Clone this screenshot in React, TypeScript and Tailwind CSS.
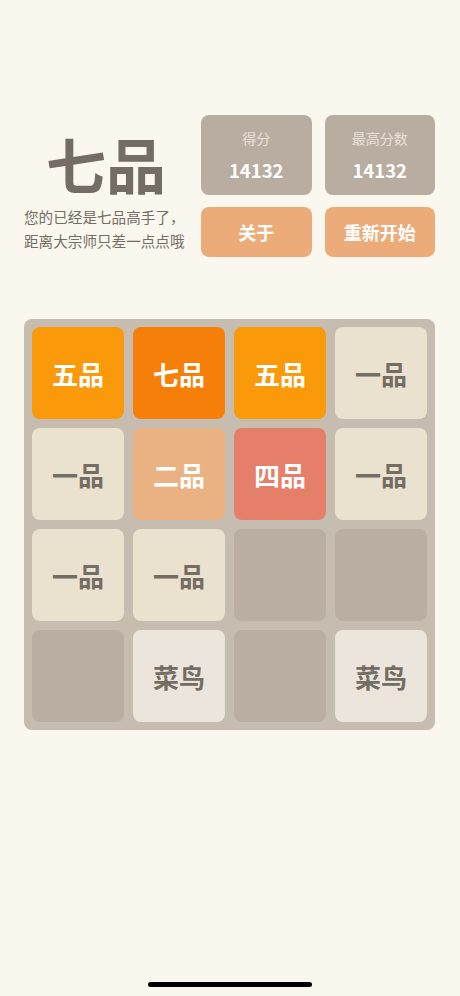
const font = { fontFamily: '"Noto Sans CJK SC", "Noto Sans", sans-serif' };

type Tile = { text: string; bg: string; fg: string };

const tiles: Tile[] = [
  { text: "五品", bg: "bg-[#fa9a0b]", fg: "text-white" },
  { text: "七品", bg: "bg-[#f57f08]", fg: "text-white" },
  { text: "五品", bg: "bg-[#fa9a0b]", fg: "text-white" },
  { text: "一品", bg: "bg-[#ebe1cf]", fg: "text-[#736d64]" },
  { text: "一品", bg: "bg-[#ebe1cf]", fg: "text-[#736d64]" },
  { text: "二品", bg: "bg-[#eab283]", fg: "text-white" },
  { text: "四品", bg: "bg-[#e57f69]", fg: "text-white" },
  { text: "一品", bg: "bg-[#ebe1cf]", fg: "text-[#736d64]" },
  { text: "一品", bg: "bg-[#ebe1cf]", fg: "text-[#736d64]" },
  { text: "一品", bg: "bg-[#ebe1cf]", fg: "text-[#736d64]" },
  { text: "", bg: "bg-[#b9aea1]", fg: "" },
  { text: "", bg: "bg-[#b9aea1]", fg: "" },
  { text: "", bg: "bg-[#b9aea1]", fg: "" },
  { text: "菜鸟", bg: "bg-[#ebe5dc]", fg: "text-[#736d64]" },
  { text: "", bg: "bg-[#b9aea1]", fg: "" },
  { text: "菜鸟", bg: "bg-[#ebe5dc]", fg: "text-[#736d64]" },
];

export default function App() {
  return (
    <div className="w-[460px] h-[996px] bg-[#f9f7ee] flex flex-col" style={font}>
      {/* 头部 */}
      <div className="flex pt-[115px] pl-[24px] pr-[25px]">
        <div className="w-[166px] flex flex-col">
          <h1 className="mt-[20px] text-center pr-[2px] text-[60px] leading-[56px] font-bold text-[#736d64]">
            七品
          </h1>
          <p className="mt-[14px] text-[14.6px] leading-[24px] text-[#736d64] whitespace-nowrap">
            您的已经是七品高手了，
            <br />
            距离大宗师只差一点点哦
          </p>
        </div>
        <div className="ml-auto grid grid-cols-2 gap-x-[13px] gap-y-[12px] w-[234px]">
          {[
            { label: "得分", value: "14132" },
            { label: "最高分数", value: "14132" },
          ].map((s) => (
            <div
              key={s.label}
              className="h-[80px] rounded-[8px] bg-[#b9ada1] flex flex-col items-center pt-[13px]"
            >
              <div className="text-[14px] leading-[20px] text-[#e9e1d7]">{s.label}</div>
              <div className="mt-[11px] text-[18.5px] leading-[22px] font-bold text-white">{s.value}</div>
            </div>
          ))}
          {["关于", "重新开始"].map((b) => (
            <button
              key={b}
              className="h-[50px] rounded-[8px] bg-[#ebac7a] text-white text-[18px] font-bold flex items-center justify-center"
            >
              {b}
            </button>
          ))}
        </div>
      </div>

      {/* 棋盘 */}
      <div className="mt-[62px] ml-[24px] w-[411px] h-[411px] rounded-[8px] bg-[#c6bcb0] p-[8px] grid grid-cols-4 gap-[9px]">
        {tiles.map((t, i) => (
          <div
            key={i}
            className={`rounded-[8px] flex items-center justify-center text-[26px] font-bold ${t.bg} ${t.fg}`}
          >
            {t.text}
          </div>
        ))}
      </div>

      <div className="flex-1" />
      <div className="flex justify-center pb-[9px]">
        <div className="w-[164px] h-[5px] rounded-full bg-black" />
      </div>
    </div>
  );
}
